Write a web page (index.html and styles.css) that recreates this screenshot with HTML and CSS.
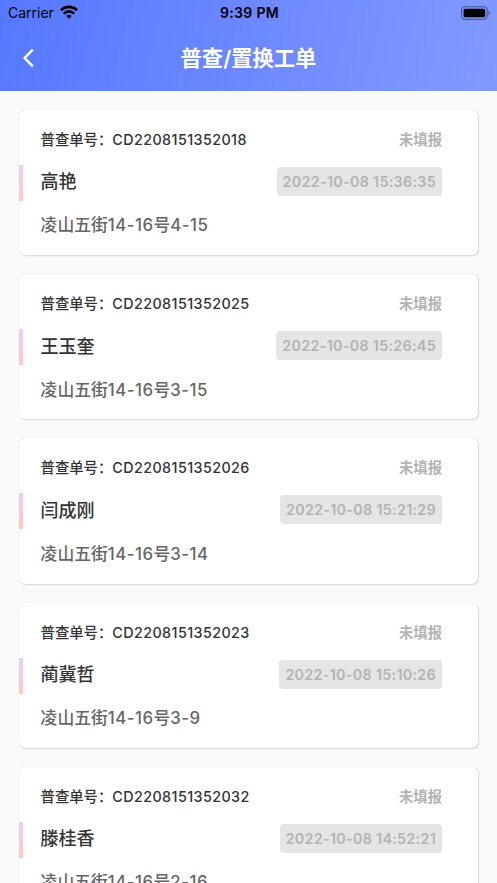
FILE: index.html
```html
<!DOCTYPE html>
<html lang="zh-CN">
<head>
  <meta charset="UTF-8" />
  <title>普查/置换工单</title>
  <link rel="stylesheet" href="styles.css">
</head>
<body>
  <header class="header">
    <div class="status-bar">
      <div class="carrier">
        <span>Carrier</span>
        <svg class="wifi" width="18" height="14" viewBox="0 0 18 14" fill="none" stroke="#000" stroke-width="2.7">
          <path d="M0.9 5.2a11.6 11.6 0 0 1 16.2 0" />
          <path d="M3.8 8.6a7.4 7.4 0 0 1 10.4 0" />
          <path d="M9 13.8L6.3 11.1a3.9 3.9 0 0 1 5.4 0z" fill="#000" stroke="none" />
        </svg>
      </div>
      <div class="clock">9:39 PM</div>
      <div class="power">
        <svg width="30" height="14" viewBox="0 0 30 14">
          <rect x="0.6" y="0.7" width="25.6" height="12.6" rx="3.6" fill="none" stroke="#000" stroke-opacity="0.45" stroke-width="1.1" />
          <rect x="2.6" y="2.7" width="21.6" height="8.6" rx="1.8" fill="#000" />
          <path d="M27.6 4.8c1.7.6 1.7 3.8 0 4.4z" fill="#000" fill-opacity="0.5" />
        </svg>
      </div>
    </div>
    <div class="nav">
      <svg class="back" width="12" height="20" viewBox="0 0 12 20" fill="none" stroke="#fff" stroke-width="2.4">
        <path d="M10.8 1.6L2.6 10l8.2 8.4" />
      </svg>
      <h1>普查/置换工单</h1>
    </div>
  </header>

  <main class="list">
    <div class="card">
      <div class="row top"><span class="number">普查单号：<b>CD2208151352018</b></span><span class="state">未填报</span></div>
      <div class="row middle"><span class="name">高艳</span><span class="time">2022-10-08 15:36:35</span></div>
      <div class="address">凌山五街<b>14-16</b>号<b>4-15</b></div>
    </div>
    <div class="card">
      <div class="row top"><span class="number">普查单号：<b>CD2208151352025</b></span><span class="state">未填报</span></div>
      <div class="row middle"><span class="name">王玉奎</span><span class="time">2022-10-08 15:26:45</span></div>
      <div class="address">凌山五街<b>14-16</b>号<b>3-15</b></div>
    </div>
    <div class="card">
      <div class="row top"><span class="number">普查单号：<b>CD2208151352026</b></span><span class="state">未填报</span></div>
      <div class="row middle"><span class="name">闫成刚</span><span class="time">2022-10-08 15:21:29</span></div>
      <div class="address">凌山五街<b>14-16</b>号<b>3-14</b></div>
    </div>
    <div class="card">
      <div class="row top"><span class="number">普查单号：<b>CD2208151352023</b></span><span class="state">未填报</span></div>
      <div class="row middle"><span class="name">蔺冀哲</span><span class="time">2022-10-08 15:10:26</span></div>
      <div class="address">凌山五街<b>14-16</b>号<b>3-9</b></div>
    </div>
    <div class="card">
      <div class="row top"><span class="number">普查单号：<b>CD2208151352032</b></span><span class="state">未填报</span></div>
      <div class="row middle"><span class="name">滕桂香</span><span class="time">2022-10-08 14:52:21</span></div>
      <div class="address">凌山五街<b>14-16</b>号<b>2-16</b></div>
    </div>
  </main>
</body>
</html>
```
FILE: styles.css
```css
* {
  box-sizing: border-box;
}

body {
  margin: 0;
  height: 883px;
  overflow: hidden;
  background: #fafafa;
  font-family: Inter, "Noto Sans CJK SC", sans-serif;
  white-space: nowrap;
}

.header {
  height: 91.3px;
  background: linear-gradient(105deg, #5578ff, #8299ff);
}

.status-bar {
  display: flex;
  height: 26px;
  align-items: center;
  padding: 0 6px 1px 8px;
  font-size: 14px;
}

.carrier,
.power {
  display: flex;
  flex: 1;
  align-items: center;
}

.power {
  justify-content: flex-end;
}

.wifi {
  margin-left: 6px;
  margin-top: -2px;
}

.clock {
  font-weight: 600;
  letter-spacing: 0.3px;
}

.nav {
  display: grid;
  grid-template-columns: 1fr auto 1fr;
  align-items: center;
  height: 65px;
  padding: 0 22px;
}

.back {
  margin-top: -2px;
}

h1 {
  margin: -1px 0 0;
  color: #fff;
  font-size: 21.3px;
  font-weight: 600;
  line-height: 30px;
}

.list {
  display: flex;
  flex-direction: column;
  gap: 19px;
  padding: 18.5px 19px 0;
}

.card {
  flex: none;
  height: 145.3px;
  padding-top: 14.5px;
  background: #fff;
  border-radius: 6px;
  box-shadow: 0 0 1px rgba(0,0,0,0.2), 1px 1px 2px rgba(0,0,0,0.12);
}

.row {
  display: flex;
  align-items: center;
  justify-content: space-between;
  padding-right: 36px;
}

.top {
  height: 28px;
  margin-bottom: 12.5px;
  padding-left: 21.6px;
}

.number {
  color: #333;
  font-size: 14.35px;
  font-weight: 500;
}

.number b {
  font-weight: 550;
  letter-spacing: 0.4px;
}

.state {
  color: #b3b3b3;
  font-size: 14.35px;
  font-weight: 700;
}

.middle {
  height: 36px;
  padding-left: 17.6px;
  border-left: 4px solid;
  border-image: linear-gradient(#e6cfff, #ffc8bd) 1;
}

.name {
  margin-top: -5px;
  color: #333;
  font-size: 18px;
  font-weight: 500;
}

.time {
  height: 29px;
  margin-top: -3px;
  padding: 0 6px;
  border-radius: 4px;
  background: #e5e5e5;
  color: #b3b3b3;
  font-size: 14.35px;
  font-weight: 600;
  letter-spacing: 0.28px;
  line-height: 29px;
}

.address {
  margin-top: 10.5px;
  padding-left: 21.6px;
  color: #666;
  font-size: 16.8px;
  font-weight: 500;
  line-height: 28px;
}

.address b {
  font-weight: 550;
  letter-spacing: 0.5px;
}
```
